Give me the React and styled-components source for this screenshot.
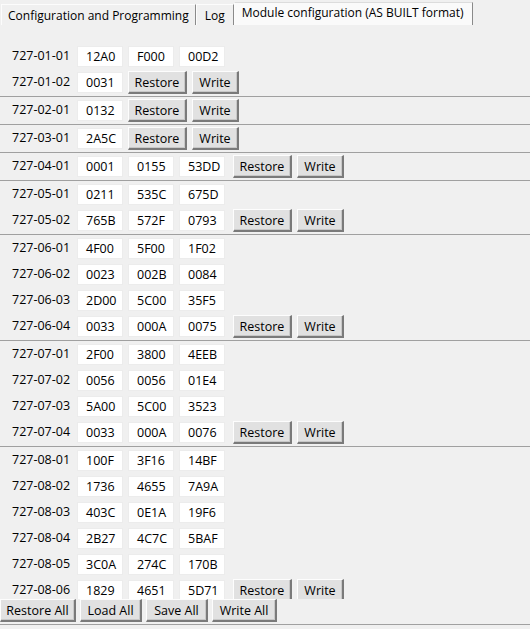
import React from 'react';
import styled, { createGlobalStyle } from 'styled-components';

const groups = [
  [['727-01-01', ['12A0', 'F000', '00D2']], ['727-01-02', ['0031'], true]],
  [['727-02-01', ['0132'], true]],
  [['727-03-01', ['2A5C'], true]],
  [['727-04-01', ['0001', '0155', '53DD'], true]],
  [['727-05-01', ['0211', '535C', '675D']], ['727-05-02', ['765B', '572F', '0793'], true]],
  [
    ['727-06-01', ['4F00', '5F00', '1F02']],
    ['727-06-02', ['0023', '002B', '0084']],
    ['727-06-03', ['2D00', '5C00', '35F5']],
    ['727-06-04', ['0033', '000A', '0075'], true],
  ],
  [
    ['727-07-01', ['2F00', '3800', '4EEB']],
    ['727-07-02', ['0056', '0056', '01E4']],
    ['727-07-03', ['5A00', '5C00', '3523']],
    ['727-07-04', ['0033', '000A', '0076'], true],
  ],
  [
    ['727-08-01', ['100F', '3F16', '14BF']],
    ['727-08-02', ['1736', '4655', '7A9A']],
    ['727-08-03', ['403C', '0E1A', '19F6']],
    ['727-08-04', ['2B27', '4C7C', '5BAF']],
    ['727-08-05', ['3C0A', '274C', '170B']],
    ['727-08-06', ['1829', '4651', '5D71'], true],
  ],
];

function App() {
  return (
    <Window>
      <GlobalStyle />
      <TabBar>
        <Tab>Configuration and Programming</Tab>
        <Tab $pad={8}>Log</Tab>
        <Tab $active>Module configuration (AS BUILT format)</Tab>
      </TabBar>
      <Scroll>
        {groups.map((rows, gi) => (
          <Group key={gi} $last={gi === groups.length - 1}>
            {rows.map(([label, values, actions]) => (
              <Row key={label} $tall={actions}>
                <Label>{label}</Label>
                {values.map((v, i) => (
                  <Cell key={i}>{v}</Cell>
                ))}
                {actions && (
                  <>
                    <Button $w={59} $ml={values.length > 1 ? 3 : 0}>Restore</Button>
                    <Button $w={47} $ml={5}>Write</Button>
                  </>
                )}
              </Row>
            ))}
          </Group>
        ))}
      </Scroll>
      <BottomBar>
        <Button $w={76} $ml={0}>Restore All</Button>
        <Button $w={62}>Load All</Button>
        <Button $w={62}>Save All</Button>
        <Button $w={65}>Write All</Button>
      </BottomBar>
    </Window>
  );
}

const GlobalStyle = createGlobalStyle`
  body {
    margin: 0;
    background: #f0f0f0;
    font-family: "Open Sans", "DejaVu Sans", sans-serif;
    font-size: 12.5px;
    color: #000;
  }
`;

const Window = styled.div`
  width: 530px;
  height: 629px;
  display: flex;
  flex-direction: column;
  overflow: hidden;
`;

const TabBar = styled.div`
  height: 25px;
  display: flex;
  align-items: flex-end;
  padding-left: 1px;
  flex-shrink: 0;
  font-size: 12px;
`;

const Tab = styled.div`
  height: ${(p) => (p.$active ? 22 : 20)}px;
  line-height: ${(p) => (p.$active ? 20 : 21)}px;
  padding: 0 ${(p) => p.$pad || (p.$active ? 8 : 6)}px 0 ${(p) => p.$pad || (p.$active ? 7 : 6)}px;
  background: ${(p) => (p.$active ? '#fafafa' : '#f0f0f0')};
  border-top: 1px solid ${(p) => (p.$active ? '#dcdcdc' : '#fcfcfc')};
  border-left: 1px solid #fcfcfc;
  border-right: 1px solid #8a8a8a;
  white-space: nowrap;
`;

const Scroll = styled.div`
  flex: 1;
  overflow: hidden;
  padding-top: 18px;
`;

const Group = styled.div`
  border-bottom: ${(p) => (p.$last ? 'none' : '1px solid #a0a0a0')};
`;

const Row = styled.div`
  height: ${(p) => (p.$tall ? 27 : 26)}px;
  display: flex;
  align-items: flex-start;
  padding-top: 1px;
  box-sizing: border-box;
`;

const Label = styled.div`
  width: 65px;
  padding-left: 12px;
  line-height: 24px;
  white-space: nowrap;
`;

const Cell = styled.div`
  width: 46px;
  height: 21px;
  margin-top: 2px;
  margin-right: 5px;
  box-sizing: border-box;
  background: #fff;
  border: 1px solid #ececec;
  padding-left: 8px;
  line-height: 19px;
`;

const Button = styled.button`
  width: ${(p) => p.$w}px;
  height: 23px;
  margin: 1px 0 0 ${(p) => (p.$ml === undefined ? 4 : p.$ml)}px;
  padding: 0;
  box-sizing: border-box;
  font: inherit;
  color: #000;
  background: #e1e1e1;
  border-top: 1px solid #fdfdfd;
  border-left: 1px solid #fdfdfd;
  border-right: 2px solid #7a7a7a;
  border-bottom: 2px solid #7a7a7a;
  box-shadow: inset -1px -1px 0 #c8c8c8;
  text-align: center;
  line-height: 19px;
`;

const BottomBar = styled.div`
  height: 25px;
  flex-shrink: 0;
  display: flex;
  align-items: flex-start;
  border-bottom: 1px solid #a0a0a0;
  margin-bottom: 4px;
  & > button {
    margin-top: 0;
  }
`;

export default App;
